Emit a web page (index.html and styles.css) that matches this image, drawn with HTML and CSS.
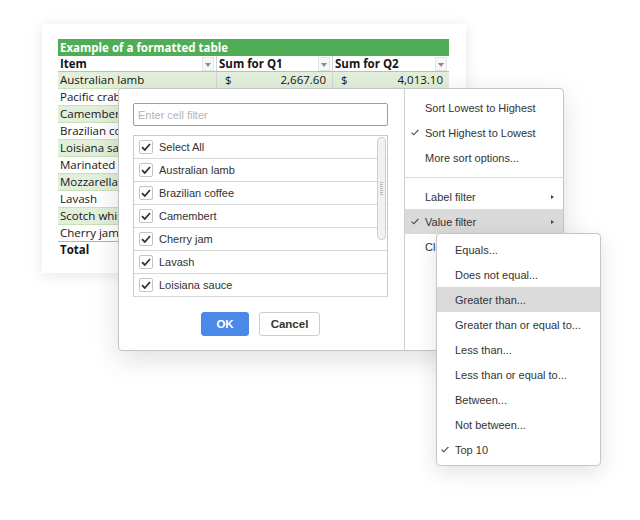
FILE: index.html
```html
<!DOCTYPE html>
<html>
<head>
<meta charset="utf-8">
<link rel="stylesheet" href="styles.css">
</head>
<body>
<div class="sheet">
  <div class="tbl">
    <div class="title">Example of a formatted table</div>
    <div class="row head">
      <div class="cell">Item<span class="dd"></span></div>
      <div class="cell sep">Sum for Q1<span class="dd"></span></div>
      <div class="cell sep">Sum for Q2<span class="dd"></span></div>
    </div>
    <div class="row band">
      <div class="cell">Australian lamb</div>
      <div class="cell sep money"><span>$</span><span>2,667.60</span></div>
      <div class="cell sep money"><span>$</span><span>4,013.10</span></div>
    </div>
    <div class="row"><div class="cell">Pacific crab</div><div class="cell sep"></div><div class="cell sep"></div></div>
    <div class="row band"><div class="cell">Camembert</div><div class="cell sep"></div><div class="cell sep"></div></div>
    <div class="row"><div class="cell">Brazilian coffee</div><div class="cell sep"></div><div class="cell sep"></div></div>
    <div class="row band"><div class="cell">Loisiana sauce</div><div class="cell sep"></div><div class="cell sep"></div></div>
    <div class="row"><div class="cell">Marinated herring</div><div class="cell sep"></div><div class="cell sep"></div></div>
    <div class="row band"><div class="cell">Mozzarella</div><div class="cell sep"></div><div class="cell sep"></div></div>
    <div class="row"><div class="cell">Lavash</div><div class="cell sep"></div><div class="cell sep"></div></div>
    <div class="row band"><div class="cell">Scotch whisky</div><div class="cell sep"></div><div class="cell sep"></div></div>
    <div class="row last"><div class="cell">Cherry jam</div><div class="cell sep"></div><div class="cell sep"></div></div>
    <div class="row total"><div class="cell">Total</div><div class="cell"></div><div class="cell"></div></div>
  </div>
</div>

<div class="dialog">
  <div class="pane">
    <input class="search" type="text" placeholder="Enter cell filter">
    <div class="list">
      <div class="item"><span class="cb"><svg width="10" height="8" viewBox="0 0 10 8"><path d="M1 4.2 L3.8 7 L9 1" fill="none" stroke="#333" stroke-width="1.8"/></svg></span>Select All</div>
      <div class="item"><span class="cb"><svg width="10" height="8" viewBox="0 0 10 8"><path d="M1 4.2 L3.8 7 L9 1" fill="none" stroke="#333" stroke-width="1.8"/></svg></span>Australian lamb</div>
      <div class="item"><span class="cb"><svg width="10" height="8" viewBox="0 0 10 8"><path d="M1 4.2 L3.8 7 L9 1" fill="none" stroke="#333" stroke-width="1.8"/></svg></span>Brazilian coffee</div>
      <div class="item"><span class="cb"><svg width="10" height="8" viewBox="0 0 10 8"><path d="M1 4.2 L3.8 7 L9 1" fill="none" stroke="#333" stroke-width="1.8"/></svg></span>Camembert</div>
      <div class="item"><span class="cb"><svg width="10" height="8" viewBox="0 0 10 8"><path d="M1 4.2 L3.8 7 L9 1" fill="none" stroke="#333" stroke-width="1.8"/></svg></span>Cherry jam</div>
      <div class="item"><span class="cb"><svg width="10" height="8" viewBox="0 0 10 8"><path d="M1 4.2 L3.8 7 L9 1" fill="none" stroke="#333" stroke-width="1.8"/></svg></span>Lavash</div>
      <div class="item"><span class="cb"><svg width="10" height="8" viewBox="0 0 10 8"><path d="M1 4.2 L3.8 7 L9 1" fill="none" stroke="#333" stroke-width="1.8"/></svg></span>Loisiana sauce</div>
      <div class="thumb"><span class="grip"></span></div>
    </div>
    <div class="buttons">
      <button class="btn ok">OK</button>
      <button class="btn cancel">Cancel</button>
    </div>
  </div>
  <div class="menu">
    <div class="mi"><span class="ck"></span>Sort Lowest to Highest</div>
    <div class="mi"><span class="ck"><svg width="8" height="7" viewBox="0 0 8 7"><path d="M0.6 3.6 L2.8 5.8 L7.4 0.8" fill="none" stroke="#444" stroke-width="1.1"/></svg></span>Sort Highest to Lowest</div>
    <div class="mi"><span class="ck"></span>More sort options...</div>
    <div class="msep"></div>
    <div class="mi"><span class="ck"></span>Label filter<span class="arr"></span></div>
    <div class="mi hl"><span class="ck"><svg width="8" height="7" viewBox="0 0 8 7"><path d="M0.6 3.6 L2.8 5.8 L7.4 0.8" fill="none" stroke="#444" stroke-width="1.1"/></svg></span>Value filter<span class="arr"></span></div>
    <div class="mi"><span class="ck"></span>Clear filter</div>
  </div>
</div>

<div class="submenu">
  <div class="si"><span class="ck"></span>Equals...</div>
  <div class="si"><span class="ck"></span>Does not equal...</div>
  <div class="si hl"><span class="ck"></span>Greater than...</div>
  <div class="si"><span class="ck"></span>Greater than or equal to...</div>
  <div class="si"><span class="ck"></span>Less than...</div>
  <div class="si"><span class="ck"></span>Less than or equal to...</div>
  <div class="si"><span class="ck"></span>Between...</div>
  <div class="si"><span class="ck"></span>Not between...</div>
  <div class="si"><span class="ck"><svg width="8" height="7" viewBox="0 0 8 7"><path d="M0.6 3.6 L2.8 5.8 L7.4 0.8" fill="none" stroke="#444" stroke-width="1.1"/></svg></span>Top 10</div>
</div>
</body>
</html>
```

FILE: styles.css
```css
* { box-sizing: border-box; }

html, body {
  margin: 0;
  padding: 0;
  background: #ffffff;
}

body {
  position: relative;
  width: 640px;
  height: 520px;
  overflow: hidden;
}

/* ---------- spreadsheet card ---------- */
.sheet {
  margin: 24px 0 0 42px;
  width: 424px;
  height: 249px;
  padding: 15px 0 0 16px;
  background: #fff;
  box-shadow: 0 2px 14px rgba(0, 0, 0, 0.10);
  font-family: "Open Sans", "Liberation Sans", sans-serif;
  font-size: 11.5px;
  color: #151515;
}

.tbl {
  width: 391px;
}

.title {
  height: 17px;
  line-height: 17px;
  padding-left: 2px;
  background: #4fae55;
  color: #fff;
  font-weight: 700;
}

.row {
  display: grid;
  grid-template-columns: 158px 116px 117px;
  height: 17px;
  border-bottom: 1px solid #c9e0b9;
}

.row.head {
  height: 16px;
  font-weight: 700;
  border-bottom: 1px solid #a9d08e;
}

.row.band {
  background: #e2efda;
}

.row.last {
  border-bottom: 1px solid #a8bfa0;
}

.row.total {
  border-bottom: none;
  font-weight: 700;
}

.cell {
  position: relative;
  padding: 0 2px;
  line-height: 16px;
  white-space: nowrap;
  overflow: hidden;
}

.cell.sep {
  border-left: 1px solid #d6d6d6;
  padding-left: 3px;
}

.head .cell.sep { padding-left: 2px; }

.money {
  display: flex;
  justify-content: space-between;
  padding: 0 6px 0 8px;
}

.cell.sep.money { padding-left: 8px; }

.dd {
  position: absolute;
  right: 2px;
  top: 1px;
  width: 12px;
  height: 14px;
  background: #f7f7f7;
  border: 1px solid #e4e4e4;
}

.dd::after {
  content: "";
  position: absolute;
  left: 2px;
  top: 5px;
  border-left: 3.5px solid transparent;
  border-right: 3.5px solid transparent;
  border-top: 4px solid #8a8a8a;
}

/* ---------- filter dialog ---------- */
.dialog {
  position: absolute;
  left: 118px;
  top: 88px;
  width: 446px;
  height: 263px;
  display: flex;
  background: #fff;
  border: 1px solid #c4c4c4;
  border-radius: 4px;
  box-shadow: 0 8px 28px rgba(0, 0, 0, 0.13);
  font-family: "Liberation Sans", Arial, sans-serif;
  font-size: 11px;
  color: #333;
}

.pane {
  width: 286px;
  border-right: 1px solid #cfcfcf;
  padding: 14px 0 0 14px;
  display: flex;
  flex-direction: column;
}

.search {
  display: block;
  width: 255px;
  height: 23px;
  margin: 0;
  padding: 0 4px;
  border: 1px solid #9c9c9c;
  border-radius: 2px;
  font-family: "Liberation Sans", Arial, sans-serif;
  font-size: 11px;
  color: #333;
  outline: none;
}

.search::placeholder { color: #b4b4b4; }

.list {
  position: relative;
  margin-top: 9px;
  width: 255px;
  height: 162px;
  border: 1px solid #c9c9c9;
  border-bottom: none;
  overflow: hidden;
}

.item {
  display: flex;
  align-items: center;
  height: 23px;
  padding-left: 5px;
  border-bottom: 1px solid #d7d7d7;
  color: #333;
}

.cb {
  width: 14px;
  height: 14px;
  margin-right: 6px;
  border: 1px solid #c4c4c4;
  border-radius: 2px;
  background: #fff;
  display: flex;
  align-items: center;
  justify-content: center;
}

.cb svg { display: block; }

.thumb {
  position: absolute;
  right: 1px;
  top: 1px;
  width: 9px;
  height: 103px;
  background: #f1f1f1;
  border: 1px solid #cfcfcf;
  border-radius: 4px;
}

.grip {
  position: absolute;
  left: 2px;
  top: 44px;
  width: 3px;
  height: 14px;
  background: repeating-linear-gradient(to bottom, #b9b9b9 0 1px, transparent 1px 2px);
}

.buttons {
  display: flex;
  justify-content: center;
  gap: 10px;
  width: 255px;
  margin-top: 15px;
}

.btn {
  height: 24px;
  margin: 0;
  border-radius: 3px;
  font-family: "Liberation Sans", Arial, sans-serif;
  font-size: 11.5px;
  font-weight: 700;
  padding: 0;
}

.btn.ok {
  width: 48px;
  background: #4a89e8;
  border: 1px solid #4a89e8;
  color: #fff;
}

.btn.cancel {
  width: 61px;
  background: #fff;
  border: 1px solid #cdcdcd;
  color: #333;
}

.menu {
  flex: 1;
  padding-top: 6px;
}

.mi {
  display: flex;
  align-items: center;
  height: 25px;
  padding: 0 9px 0 6px;
}

.ck {
  width: 14px;
  flex: none;
  display: flex;
  align-items: center;
}

.ck svg { display: block; }

.hl { background: #dadada; }

.arr {
  margin-left: auto;
  width: 0;
  height: 0;
  border-top: 2.5px solid transparent;
  border-bottom: 2.5px solid transparent;
  border-left: 3px solid #444;
}

.msep {
  height: 1px;
  margin: 7px 0 6px;
  background: #dcdcdc;
}

/* ---------- submenu ---------- */
.submenu {
  position: absolute;
  left: 436px;
  top: 233px;
  width: 165px;
  height: 233px;
  padding: 3px 0;
  background: #fff;
  border: 1px solid #c6c6c6;
  border-radius: 4px;
  box-shadow: 0 6px 22px rgba(0, 0, 0, 0.12);
  font-family: "Liberation Sans", Arial, sans-serif;
  font-size: 11px;
  color: #333;
}

.si {
  display: flex;
  align-items: center;
  height: 25px;
  padding-left: 4px;
}
```
